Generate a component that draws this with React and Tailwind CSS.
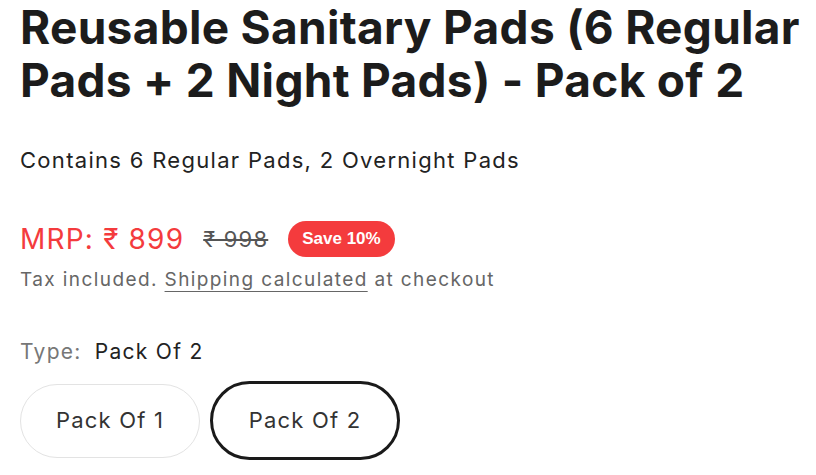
import React from 'react';

const body = { fontFamily: 'Inter, "Liberation Sans", sans-serif' };

const PackOption = ({ label, active }) => (
    <button
        type="button"
        className={
            active
                ? 'flex h-[79px] w-[190px] items-center justify-center rounded-full border-[3px] border-[#1a1a1a] bg-white text-[22px] tracking-[1.2px] text-[#333]'
                : 'flex h-[74px] w-[180px] items-center justify-center rounded-full border border-[#e3e3e3] bg-white text-[22px] tracking-[1.2px] text-[#333]'
        }
    >
        {label}
    </button>
);

export default function App() {
    return (
        <div className="min-h-[475px] w-[816px] bg-white pl-5 pt-[1px]" style={body}>
            {/* Titulo del producto */}
            <h1 className="pr-1 text-[46px] font-bold leading-[53px] tracking-[0.3px] text-[#1c1c1c]">
                Reusable Sanitary Pads (6 Regular Pads + 2 Night Pads) - Pack of 2
            </h1>

            <p className="mt-[39px] text-[22px] leading-[28px] tracking-[1.3px] text-[#222]">
                Contains 6 Regular Pads, 2 Overnight Pads
            </p>

            {/* Precio */}
            <div className="mt-[47px] flex h-[36px] items-center">
                <span className="text-[28px] leading-[36px] tracking-[1.2px] text-[#f43b3d]">MRP: ₹ 899</span>
                <span className="ml-[19px] text-[22px] leading-[36px] tracking-[1.2px] text-[#555] line-through decoration-[2px]">₹ 998</span>
                <span className="ml-[20px] flex h-[36px] items-center rounded-full bg-[#f43b3d] px-[14px] font-['Liberation_Sans',sans-serif] text-[17px] font-bold text-white">
                    Save 10%
                </span>
            </div>
            <p className="mt-[9px] text-[19px] leading-[28px] tracking-[1.4px] text-[#666]">
                Tax included. <span className="underline decoration-1 underline-offset-[5px]">Shipping calculated</span> at checkout
            </p>

            {/* Variante */}
            <div className="mt-[44px] flex items-center gap-[13px] text-[21px] leading-[28px] tracking-[1.3px]">
                <span className="text-[#777]">Type:</span>
                <span className="text-[#222]">Pack Of 2</span>
            </div>
            <div className="mt-[15px] flex items-center gap-[10px]">
                <PackOption label="Pack Of 1" />
                <PackOption label="Pack Of 2" active />
            </div>
        </div>
    );
}
